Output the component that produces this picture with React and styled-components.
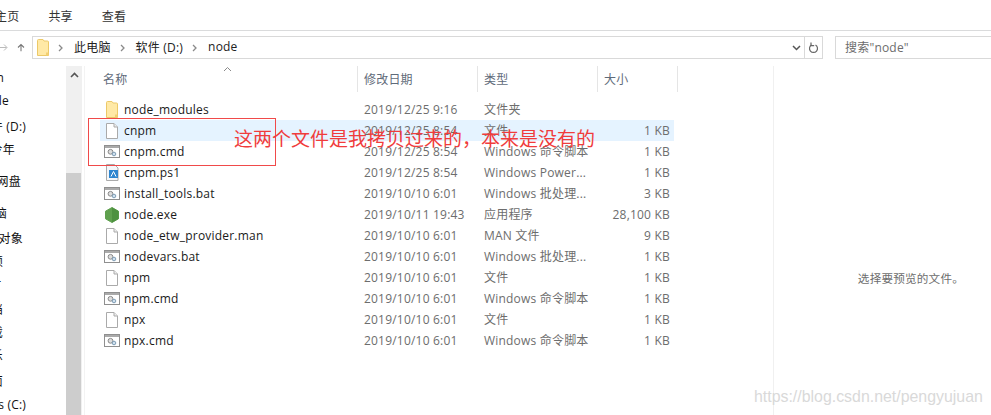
import React from "react";
import styled, { createGlobalStyle } from "styled-components";

const UI_FONT = `"Open Sans", "Noto Sans CJK SC", sans-serif`;

const navItems = [
  { label: "Admin", top: 0, right: 62 },
  { label: "Google", top: 0, right: 57 },
  { label: "软件 (D:)", top: 2, right: 40 },
  { label: "今年", top: 0, right: 51 },
  { label: "百度网盘", top: 9, right: 45 },
  { label: "此电脑", top: 9, right: 59 },
  { label: "3D 对象", top: 2, right: 43 },
  { label: "视频", top: 0, right: 63 },
  { label: "图片", top: 0, right: 64 },
  { label: "文档", top: 2, right: 63 },
  { label: "下载", top: 0, right: 63 },
  { label: "音乐", top: 0, right: 63 },
  { label: "桌面", top: 3, right: 63 },
  { label: "Windows (C:)", top: 1, right: 40 },
];

const files = [
  { name: "node_modules", date: "2019/12/25 9:16", type: "文件夹", size: "", icon: "folder" },
  { name: "cnpm", date: "2019/12/25 8:54", type: "文件", size: "1 KB", icon: "file", selected: true },
  { name: "cnpm.cmd", date: "2019/12/25 8:54", type: "Windows 命令脚本", size: "1 KB", icon: "cmd" },
  { name: "cnpm.ps1", date: "2019/12/25 8:54", type: "Windows Power...", size: "1 KB", icon: "ps" },
  { name: "install_tools.bat", date: "2019/10/10 6:01", type: "Windows 批处理...", size: "3 KB", icon: "cmd" },
  { name: "node.exe", date: "2019/10/11 19:43", type: "应用程序", size: "28,100 KB", icon: "node" },
  { name: "node_etw_provider.man", date: "2019/10/10 6:01", type: "MAN 文件", size: "9 KB", icon: "file" },
  { name: "nodevars.bat", date: "2019/10/10 6:01", type: "Windows 批处理...", size: "1 KB", icon: "cmd" },
  { name: "npm", date: "2019/10/10 6:01", type: "文件", size: "1 KB", icon: "file" },
  { name: "npm.cmd", date: "2019/10/10 6:01", type: "Windows 命令脚本", size: "1 KB", icon: "cmd" },
  { name: "npx", date: "2019/10/10 6:01", type: "文件", size: "1 KB", icon: "file" },
  { name: "npx.cmd", date: "2019/10/10 6:01", type: "Windows 命令脚本", size: "1 KB", icon: "cmd" },
];

const GlobalStyle = createGlobalStyle`
  html, body {
    margin: 0;
    padding: 0;
    background: #fff;
  }
  body {
    font-family: ${UI_FONT};
    font-size: 12px;
    letter-spacing: 0.2px;
    color: #1a1a1a;
  }
`;

const Window = styled.div`
  position: relative;
  width: 991px;
  height: 415px;
  overflow: hidden;
  background: #fff;
`;

const Ribbon = styled.div`
  height: 31px;
  box-sizing: border-box;
  display: flex;
  align-items: center;
  border-bottom: 1px solid #dadbdc;
  margin-left: -5px;
  padding-top: 2px;
  gap: 29px;
`;

const Tab = styled.div`
  font-size: 12px;
  color: #333;
`;

const AddressRow = styled.div`
  height: 35px;
  box-sizing: border-box;
  padding-top: 5px;
  display: flex;
  align-items: flex-start;
`;

const NavArrows = styled.div`
  width: 32px;
  height: 23px;
  flex: none;
  display: flex;
  align-items: center;
  justify-content: flex-end;
  gap: 9px;
  padding-right: 7px;
  box-sizing: border-box;
`;

const AddressBox = styled.div`
  width: 791px;
  height: 23px;
  box-sizing: border-box;
  flex: none;
  border: 1px solid #d9d9d9;
  display: flex;
  align-items: center;
  padding-left: 4px;
`;

const Crumb = styled.span`
  color: #222;
  font-size: 12px;
  margin-left: 11px;
  margin-bottom: 2px;
`;

const Sep = styled.span`
  margin-left: 9px;
  display: inline-flex;
`;

const DropArea = styled.div`
  margin-left: auto;
  display: flex;
  align-items: center;
  height: 100%;
`;

const RefreshCell = styled.div`
  width: 17px;
  height: 100%;
  margin-left: 3px;
  border-left: 1px solid #d9d9d9;
  display: flex;
  align-items: center;
  justify-content: center;
`;

const SearchBox = styled.div`
  margin-left: 12px;
  flex: 1;
  height: 23px;
  box-sizing: border-box;
  border: 1px solid #d9d9d9;
  border-right: none;
  padding: 0 0 2px 9px;
  display: flex;
  align-items: center;
  color: #6d6d6d;
  font-size: 12px;
`;

const Main = styled.div`
  height: 349px;
  display: flex;
`;

const NavPane = styled.div`
  width: 66px;
  flex: none;
  overflow: hidden;
`;

const NavItem = styled.div`
  height: 23px;
  display: flex;
  justify-content: flex-end;
  align-items: center;
  white-space: nowrap;
  margin-top: ${({ $top }) => $top}px;
  padding-right: ${({ $right }) => $right}px;
  color: #111;
  font-size: 12px;
`;

const NavScroll = styled.div`
  width: 16px;
  flex: none;
  background: #f0f0f0;
  display: flex;
  flex-direction: column;
`;

const ScrollBtn = styled.div`
  height: 17px;
  display: flex;
  align-items: center;
  justify-content: center;
`;

const ScrollGap = styled.div`
  height: 90px;
`;

const ScrollThumb = styled.div`
  width: 15px;
  flex: 1;
  background: #cdcdcd;
`;

const FileArea = styled.div`
  width: 689px;
  flex: none;
  border-left: 1px solid #f3f3f3;
  margin-left: 2px;
  padding-left: 15px;
  box-sizing: border-box;
`;

const Header = styled.div`
  position: relative;
  height: 33px;
  display: grid;
  grid-template-columns: 258px 120px 120px 80px;
`;

const HeaderCell = styled.div`
  height: 26px;
  padding-left: ${({ $pad }) => $pad}px;
  display: flex;
  align-items: center;
  color: #5f6b7a;
  font-size: 12px;
  border-right: 1px solid #e5e5e5;
`;

const SortMark = styled.svg`
  position: absolute;
  left: 123px;
  top: 0;
`;

const Row = styled.div`
  height: 21px;
  width: 574px;
  display: grid;
  grid-template-columns: 257px 120px 120px 77px;
  align-items: center;
  background: ${({ $selected }) => ($selected ? "#e5f3ff" : "transparent")};
`;

const NameCell = styled.div`
  display: flex;
  align-items: center;
  gap: 3px;
  padding-left: 3px;
  color: #1a1a1a;
  font-size: 12px;
  white-space: nowrap;
`;

const IconSlot = styled.span`
  width: 18px;
  height: 18px;
  flex: none;
  display: flex;
  align-items: center;
  justify-content: center;
`;

const MetaCell = styled.div`
  padding-left: 7px;
  color: #6d6d6d;
  font-size: 12px;
  line-height: 16px;
  white-space: nowrap;
`;

const SizeCell = styled.div`
  text-align: right;
  padding-right: 4px;
  color: #6d6d6d;
  font-size: 12px;
  white-space: nowrap;
`;

const PreviewPane = styled.div`
  flex: 1;
  border-left: 1px solid #f0f0f0;
  display: flex;
  justify-content: flex-end;
  padding: 205px 27px 0 0;
`;

const PreviewHint = styled.div`
  color: #6d6d6d;
  font-size: 11.6px;
  line-height: 16px;
`;

const RedFrame = styled.div`
  position: absolute;
  left: 88px;
  top: 118px;
  width: 186px;
  height: 46px;
  border: 1px solid #f04a4a;
`;

const Annotation = styled.div`
  position: absolute;
  left: 234px;
  top: 126px;
  color: #f03c3c;
  font-size: 19px;
  line-height: 24px;
  letter-spacing: 0;
  white-space: nowrap;
  font-family: "Noto Sans CJK SC", sans-serif;
`;

const Watermark = styled.div`
  position: absolute;
  left: 754px;
  top: 388px;
  color: #d9d9d9;
  font-family: "Liberation Sans", sans-serif;
  font-size: 15.9px;
  letter-spacing: 0;
  line-height: 18px;
  white-space: nowrap;
`;

function FolderIcon() {
  return (
    <svg width="12" height="17" viewBox="0 0 12 17">
      <path d="M.5 1.500q0-1 1-1h4.500l1 1.500h3.500q1 0 1 1v13.500h-11z" fill="#ffe9a6" stroke="#ecc968" />
      <path d="M9 16.500v-3h2.500v3z" fill="#f2cf73" />
    </svg>
  );
}

function FileIcon() {
  return (
    <svg width="12" height="16" viewBox="0 0 12 16">
      <path d="M.5.5h7.500l3.500 3.500v11.500h-11z" fill="#fff" stroke="#aaa" />
      <path d="M8 .5v3.500h3.500" fill="#eee" stroke="#aaa" />
    </svg>
  );
}

function CmdIcon() {
  return (
    <svg width="16" height="13" viewBox="0 0 16 13">
      <rect x=".5" y=".5" width="15" height="12" fill="#fff" stroke="#8f8f8f" />
      <rect x="1" y="1" width="14" height="2" fill="#aaa" />
      <circle cx="6.500" cy="6.800" r="2.400" fill="#ddd" stroke="#8a8a8a" />
      <circle cx="10" cy="9" r="1.800" fill="#cfe0ee" stroke="#7f9db5" />
    </svg>
  );
}

function PsIcon() {
  return (
    <svg width="13" height="17" viewBox="0 0 13 17">
      <path d="M.5.5h8l3.500 3.500v12.500h-11.500z" fill="#f4f7fa" stroke="#aaa" />
      <rect x="3" y="6" width="9" height="8" fill="#2f86cf" />
      <path d="M5 12.500l2.500-5 2.500 5" fill="none" stroke="#fff" />
    </svg>
  );
}

function NodeIcon() {
  return (
    <svg width="14" height="16" viewBox="0 0 14 16">
      <path d="M7 .5l6.500 3.700v7.600L7 15.500.5 11.800V4.200z" fill="#5fa04e" stroke="#5fa04e" strokeLinejoin="round" />
      <path d="M7 .5l6.500 3.700v7.600L7 15.500z" fill="#4e9140" />
    </svg>
  );
}

const iconFor = {
  folder: <FolderIcon />,
  file: <FileIcon />,
  cmd: <CmdIcon />,
  ps: <PsIcon />,
  node: <NodeIcon />,
};

function Chevron() {
  return (
    <svg width="5" height="8" viewBox="0 0 5 8">
      <path d="M1 1l3 3-3 3" fill="none" stroke="#8a8a8a" strokeWidth="1.300" />
    </svg>
  );
}

export default function App() {
  return (
    <>
      <GlobalStyle />
      <Window>
        <Ribbon>
          <Tab>主页</Tab>
          <Tab>共享</Tab>
          <Tab>查看</Tab>
        </Ribbon>
        <AddressRow>
          <NavArrows>
            <svg width="12" height="13" viewBox="0 0 12 13">
              <path d="M0 6.500h10M6 2l4.500 4.500L6 11" fill="none" stroke="#bbb" strokeWidth="1.500" />
            </svg>
            <svg width="12" height="13" viewBox="0 0 12 13">
              <path d="M6 12V2M1.500 6.500L6 2l4.500 4.500" fill="none" stroke="#777" strokeWidth="1.600" />
            </svg>
          </NavArrows>
          <AddressBox>
            <FolderIcon />
            <Sep><Chevron /></Sep>
            <Crumb>此电脑</Crumb>
            <Sep><Chevron /></Sep>
            <Crumb>软件 (D:)</Crumb>
            <Sep><Chevron /></Sep>
            <Crumb>node</Crumb>
            <DropArea>
              <svg width="9" height="6" viewBox="0 0 9 6">
                <path d="M1 1l3.500 3.500L8 1" fill="none" stroke="#555" strokeWidth="1.500" />
              </svg>
              <RefreshCell>
                <svg width="11" height="12" viewBox="0 0 11 12">
                  <path d="M3.500 3a4 4 0 1 0 4 0" fill="none" stroke="#666" strokeWidth="1.200" />
                  <path d="M3 .5v3.200h3.200" fill="none" stroke="#666" strokeWidth="1.200" />
                </svg>
              </RefreshCell>
            </DropArea>
          </AddressBox>
          <SearchBox>搜索"node"</SearchBox>
        </AddressRow>
        <Main>
          <NavPane>
            {navItems.map((item) => (
              <NavItem key={item.label} $top={item.top} $right={item.right}>
                {item.label}
              </NavItem>
            ))}
          </NavPane>
          <NavScroll>
            <ScrollBtn>
              <svg width="9" height="6" viewBox="0 0 9 6">
                <path d="M1 5l3.500-3.500L8 5" fill="none" stroke="#555" strokeWidth="1.600" />
              </svg>
            </ScrollBtn>
            <ScrollGap />
            <ScrollThumb />
          </NavScroll>
          <FileArea>
            <Header>
              <SortMark width="9" height="6" viewBox="0 0 9 6">
                <path d="M1 5l3.500-3.500L8 5" fill="none" stroke="#8a8a8a" />
              </SortMark>
              <HeaderCell $pad={3}>名称</HeaderCell>
              <HeaderCell $pad={6}>修改日期</HeaderCell>
              <HeaderCell $pad={6}>类型</HeaderCell>
              <HeaderCell $pad={6}>大小</HeaderCell>
            </Header>
            {files.map((file) => (
              <Row key={file.name} $selected={file.selected}>
                <NameCell>
                  <IconSlot>{iconFor[file.icon]}</IconSlot>
                  {file.name}
                </NameCell>
                <MetaCell>{file.date}</MetaCell>
                <MetaCell>{file.type}</MetaCell>
                <SizeCell>{file.size}</SizeCell>
              </Row>
            ))}
          </FileArea>
          <PreviewPane>
            <PreviewHint>选择要预览的文件。</PreviewHint>
          </PreviewPane>
        </Main>
        <RedFrame />
        <Annotation>这两个文件是我拷贝过来的，本来是没有的</Annotation>
        <Watermark>https://blog.csdn.net/pengyujuan</Watermark>
      </Window>
    </>
  );
}
